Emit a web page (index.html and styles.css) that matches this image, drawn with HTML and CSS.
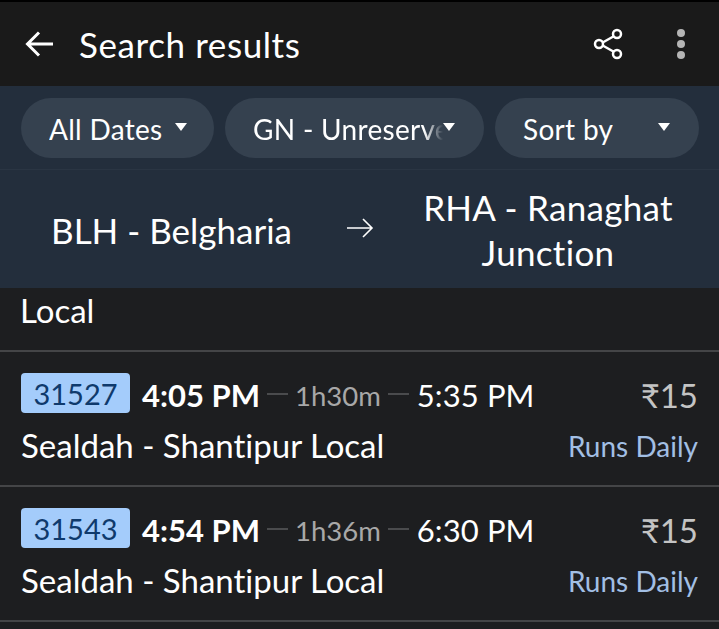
FILE: index.html
```html
<!DOCTYPE html>
<html lang="en">
<head>
    <meta charset="UTF-8">
    <meta name="viewport" content="width=device-width, initial-scale=1.0">
    <title>Search results</title>
    <link rel="stylesheet" href="styles.css">
</head>
<body>

    <!-- Toolbar -->
    <div class="toolbar">
        <svg class="back-icon" width="32" height="30" viewBox="0 0 32 30">
            <path d="M31 15H6M17 3.500L5.500 15L17 26.500" fill="none" stroke="#fff" stroke-width="3"/>
        </svg>
        <div class="title">Search results</div>
        <svg class="share-icon" width="30" height="32" viewBox="0 0 30 32">
            <path d="M7 16L23 7M7 16L23 25" stroke="#fff" stroke-width="2.500"/>
            <circle cx="6" cy="16" r="4" fill="#1a1a1a" stroke="#fff" stroke-width="2.500"/>
            <circle cx="24" cy="6" r="4" fill="#1a1a1a" stroke="#fff" stroke-width="2.500"/>
            <circle cx="24" cy="26" r="4" fill="#1a1a1a" stroke="#fff" stroke-width="2.500"/>
        </svg>
        <div class="more-icon">
            <span class="dot"></span>
            <span class="dot"></span>
            <span class="dot"></span>
        </div>
    </div>

    <!-- Filter -->
    <div class="filters">
        <div class="pill pill-dates">
            <span class="pill-text">All Dates</span>
            <span class="caret"></span>
        </div>
        <div class="pill pill-class">
            <span class="pill-text pill-fade">GN - Unreserved</span>
            <span class="caret"></span>
        </div>
        <div class="pill pill-sort">
            <span class="pill-text">Sort by</span>
            <span class="caret"></span>
        </div>
    </div>

    <!-- Strecke -->
    <div class="route">
        <div class="station station-from">BLH - Belgharia</div>
        <svg class="route-arrow" width="28" height="22" viewBox="0 0 28 22">
            <path d="M1 11H26M17 2L26 11L17 20" fill="none" stroke="#fff" stroke-width="1.600"/>
        </svg>
        <div class="station station-to">RHA - Ranaghat Junction</div>
    </div>

    <!-- Ergebnisse -->
    <div class="results">
        <div class="partial">Local</div>

        <div class="train">
            <div class="train-top">
                <span class="train-no">31527</span>
                <span class="depart">4:05 PM</span>
                <span class="line"></span>
                <span class="duration">1h30m</span>
                <span class="line"></span>
                <span class="arrive">5:35 PM</span>
                <span class="fare">₹15</span>
            </div>
            <div class="train-bottom">
                <span class="train-name">Sealdah - Shantipur Local</span>
                <span class="runs">Runs Daily</span>
            </div>
        </div>

        <div class="train">
            <div class="train-top">
                <span class="train-no">31543</span>
                <span class="depart">4:54 PM</span>
                <span class="line"></span>
                <span class="duration">1h36m</span>
                <span class="line"></span>
                <span class="arrive">6:30 PM</span>
                <span class="fare">₹15</span>
            </div>
            <div class="train-bottom">
                <span class="train-name">Sealdah - Shantipur Local</span>
                <span class="runs">Runs Daily</span>
            </div>
        </div>
    </div>

</body>
</html>
```

FILE: styles.css
```css
html, body {
    margin: 0;
    padding: 0;
    height: 629px;
    overflow: hidden;
}
body {
    font-family: Lato, "Open Sans", sans-serif;
    font-variant-ligatures: none;
    background-color: #1d1e20;
    color: #fff;
}
.toolbar {
    display: flex;
    align-items: center;
    height: 84px;
    border-top: 2px solid #000;
    background-color: #1a1a1a;
    padding-left: 22px;
    padding-right: 34px;
}
.back-icon {
    margin-right: 25px;
}
.title {
    flex: 1;
    font-size: 35px;
    letter-spacing: 0.6px;
}
.share-icon {
    margin-right: 54px;
}
.more-icon {
    display: flex;
    flex-direction: column;
    gap: 3px;
}
.dot {
    width: 8px;
    height: 8px;
    border-radius: 50%;
    background-color: #b5b5b5;
}
.filters {
    display: flex;
    gap: 11px;
    height: 84px;
    box-sizing: border-box;
    padding: 12px 0 0 21px;
    background-color: #232e3c;
    border-bottom: 1px solid #2a3543;
}
.pill {
    display: flex;
    flex-shrink: 0;
    align-items: center;
    box-sizing: border-box;
    height: 60px;
    border-radius: 30px;
    background-color: #35414f;
    padding-left: 28px;
    font-size: 28px;
    letter-spacing: 0.3px;
}
.pill-dates {
    width: 193px;
}
.pill-class {
    width: 259px;
}
.pill-sort {
    width: 204px;
}
.pill-text {
    white-space: nowrap;
    overflow: hidden;
    padding-top: 2px;
}
.pill-fade {
    width: 190px;
    flex-shrink: 0;
    -webkit-mask-image: linear-gradient(to right, #000 90%, transparent);
    mask-image: linear-gradient(to right, #000 90%, transparent);
}
.caret {
    width: 0;
    height: 0;
    margin-left: 12px;
    margin-bottom: 3px;
    border-left: 6px solid transparent;
    border-right: 6px solid transparent;
    border-top: 8px solid #fff;
}
.pill-class .caret {
    margin-left: 0;
}
.pill-sort .caret {
    margin-left: 45px;
}
.route {
    display: flex;
    align-items: center;
    height: 118px;
    background-color: #232e3c;
    font-size: 35px;
}
.station {
    text-align: center;
    line-height: 45px;
    padding-top: 2px;
}
.station-from {
    margin-left: 51px;
    width: 239px;
    white-space: nowrap;
}
.route-arrow {
    margin-left: 56px;
    margin-top: -2px;
}
.station-to {
    margin-left: 39px;
    width: 270px;
    letter-spacing: 0.3px;
}
.partial {
    height: 64px;
    box-sizing: border-box;
    padding: 2px 20px 0;
    font-size: 33px;
    border-bottom: 2px solid #444547;
}
.train {
    height: 135px;
    box-sizing: border-box;
    padding: 21px 21px 0;
    border-bottom: 2px solid #444547;
}
.train-top {
    display: flex;
    align-items: center;
    height: 40px;
}
.train-no {
    box-sizing: border-box;
    width: 109px;
    height: 40px;
    line-height: 42px;
    text-align: center;
    border-radius: 4px;
    background-color: #a4ccfb;
    color: #0f3a6c;
    font-size: 29px;
}
.depart {
    margin-left: 12px;
    font-size: 31px;
    font-weight: 700;
    padding-top: 4px;
}
.line {
    width: 21px;
    height: 2px;
    margin-left: 7px;
    margin-right: 7px;
    margin-top: 2px;
    background-color: #4a4b4d;
}
.duration {
    font-size: 27.500px;
    color: #a8a8a8;
    padding-top: 4px;
}
.arrive {
    margin-left: 1px;
    font-size: 31px;
    letter-spacing: 0.1px;
    padding-top: 4px;
}
.fare {
    margin-left: auto;
    font-size: 33px;
    color: #c4c4c4;
    padding-top: 4px;
}
.train-bottom {
    display: flex;
    justify-content: space-between;
    align-items: center;
    margin-top: 12px;
}
.train-name {
    font-size: 33px;
}
.runs {
    font-size: 28px;
    padding-top: 2px;
    color: #a2bfe4;
}
```
